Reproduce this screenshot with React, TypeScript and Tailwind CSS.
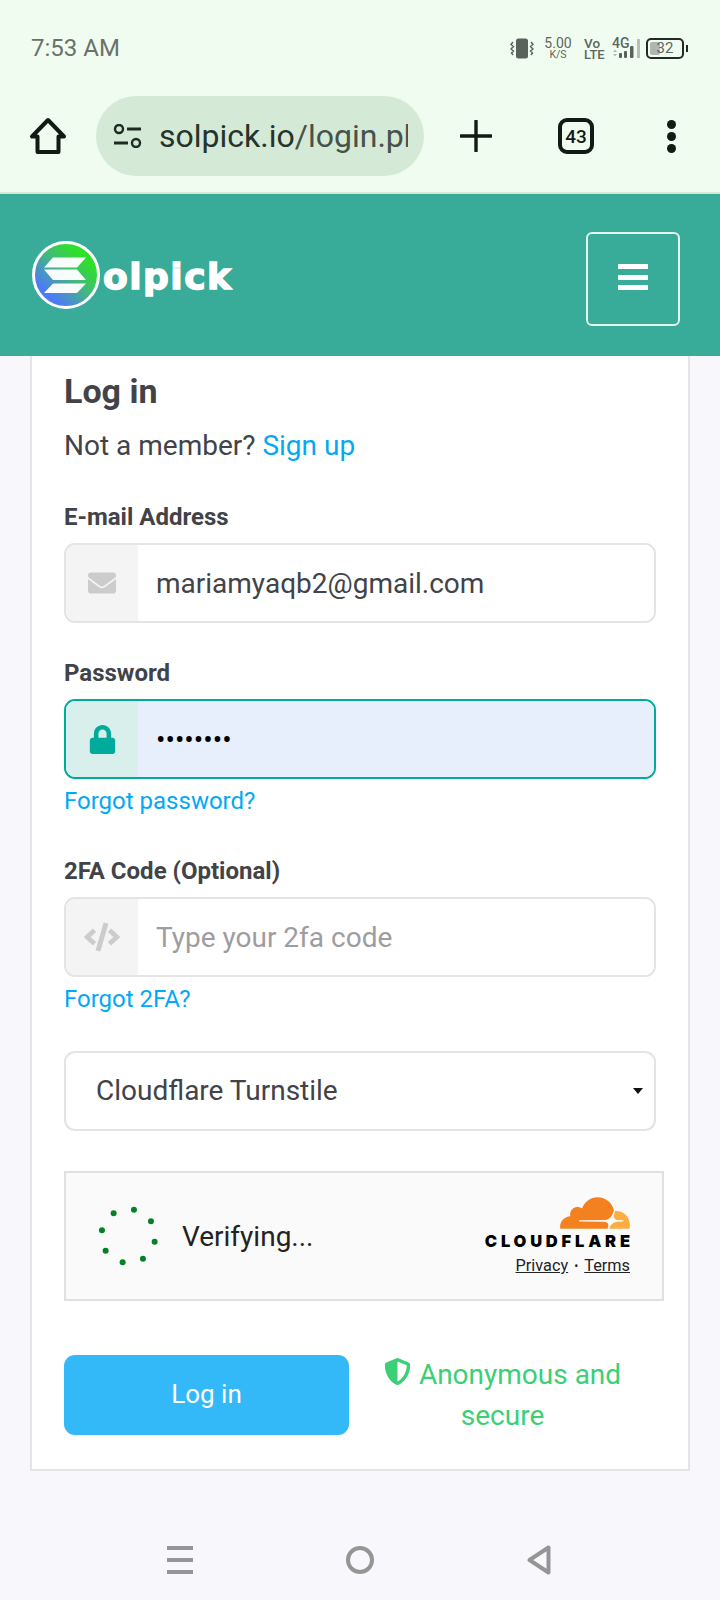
import { FaEnvelope, FaLock, FaCode, FaShieldAlt } from "react-icons/fa";

function Field({ icon, value, type = "text", placeholder, focused = false }: { icon: React.ReactNode; value?: string; type?: string; placeholder?: string; focused?: boolean }) {
  return (
    <div className={`flex h-[80px] w-[592px] overflow-hidden rounded-[11px] border-2 ${focused ? "border-[#00ab9b]" : "border-[#e4e4e4]"}`}>
      <div className={`flex w-[72px] shrink-0 items-center justify-center ${focused ? "bg-[#d8efec] text-[#00ab9b]" : "bg-[#f4f4f4] text-[#cccccc]"}`}>{icon}</div>
      <input
        readOnly
        type={type}
        value={value}
        placeholder={placeholder}
        className={`h-full min-w-0 flex-1 pl-[18px] text-[28px] outline-none placeholder:text-[#9d9da1] ${focused ? "bg-[#e8effc] text-black" : "bg-white text-[#424349]"}`}
      />
    </div>
  );
}

const dots = [[221,149],[272,184],[283,245],[248,296],[187,307],[136,272],[125,211],[160,160]];

export default function App() {
  return (
    <div className="flex h-[1600px] w-[720px] flex-col overflow-hidden bg-[#f8f8fc] font-['Roboto',sans-serif] text-[#424349]">
      {/* Status bar */}
      <div className="flex h-[96px] shrink-0 items-center justify-between bg-[#f1fcf0] pl-[31px] pr-[32px] text-[#5f6660]">
        <span className="text-[24px] leading-none text-[#6a716b]">7:53 AM</span>
        <div className="flex items-center">
          <svg width="24" height="21" viewBox="0 0 24 21" className="mr-[10px]" fill="none">
            <rect x="6" y="0.5" width="12" height="20" rx="2.5" fill="#5a625c" />
            <path d="M3 4L1 6.5l2.500 2-2.500 2.500 2.500 2L1.500 15l1.500 2M21 4l2 2.500-2.500 2 2.500 2.500-2.500 2 2 2-1.500 2" stroke="#5a625c" strokeWidth="1.400" />
          </svg>
          <div className="mr-[12px] flex w-[28px] flex-col items-center">
            <span className="text-[14px] leading-[12px]">5.00</span>
            <span className="mt-[1px] text-[10.500px] leading-[9px]">K/S</span>
          </div>
          <div className="mr-[8px] flex w-[20px] flex-col font-medium">
            <span className="text-[13.500px] leading-[12px]">Vo</span>
            <span className="text-[13px] leading-[11px]">LTE</span>
          </div>
          <div className="relative mr-[6px] h-[21px] w-[28px]">
            <span className="block text-[14px] font-medium leading-[11px]">4G</span>
            <svg width="28" height="21" viewBox="0 0 28 21" fill="none" className="absolute left-0 top-0">
              <path d="M1 14l2-2.500 2 2.500zM1 16l2 2.500 2-2.500z" fill="#b5bab5" />
              <rect x="7" y="15" width="3" height="5" rx="1" fill="#5a625c" />
              <rect x="12" y="13" width="3" height="7" rx="1" fill="#5a625c" />
              <rect x="18" y="8" width="3.500" height="12" rx="1" fill="#5a625c" />
              <rect x="25" y="1" width="3" height="19" fill="#b9beb9" />
            </svg>
          </div>
          <div className="flex items-center">
            <div className="relative flex h-[21px] w-[38px] items-center justify-center rounded-[5px] border-2 border-[#222a24] text-[15px] leading-none">
              <span className="absolute bottom-[2px] left-[2px] top-[2px] w-[10px] rounded-[2px] bg-[#b0b5b0]" />
              <span className="relative">32</span>
            </div>
            <span className="ml-[2px] h-[7px] w-[2px] bg-[#222a24]" />
          </div>
        </div>
      </div>

      {/* Browser toolbar */}
      <div className="flex h-[98px] shrink-0 items-start border-b-2 border-[#d8e8d8] bg-[#f1fcf0]">
        <div className="flex h-[80px] w-[96px] items-center justify-center">
          <svg width="38" height="38" viewBox="0 0 38 38" fill="none" stroke="#111a14" strokeWidth="4" strokeLinejoin="round" strokeLinecap="round">
            <path d="M19 3L3 19.5h5.5V35h21V19.5H35z" />
          </svg>
        </div>
        <div className="flex h-[80px] w-[328px] items-center rounded-[40px] bg-[#d5e9d7] pl-[17px]">
          <svg width="30" height="24" viewBox="0 0 30 24" fill="none" stroke="#1e2a22" strokeWidth="2.400" className="mr-[16px] shrink-0">
            <circle cx="6" cy="5" r="4" />
            <path d="M14 5h14M1 19h14" strokeWidth="2.800" />
            <circle cx="23" cy="19" r="4" />
          </svg>
          <div className="w-[249px] overflow-hidden whitespace-nowrap text-[32px] leading-[38px] text-[#26332b]">
            solpick.io<span className="text-[#45534a]">/login.php</span>
          </div>
        </div>
        <div className="flex h-[80px] w-[104px] items-center justify-center">
          <svg width="32" height="32" viewBox="0 0 32 32" stroke="#111a14" strokeWidth="3.400" strokeLinecap="round">
            <path d="M16 1v30M1 16h30" />
          </svg>
        </div>
        <div className="flex h-[80px] w-[96px] items-center justify-center">
          <div className="flex h-[36px] w-[36px] items-center justify-center rounded-[9px] border-[4px] border-[#111a14] text-[19px] font-medium leading-none text-[#111a14]">43</div>
        </div>
        <div className="flex h-[80px] w-[94px] flex-col items-center justify-center gap-[3px]">
          <span className="h-[9px] w-[9px] rounded-full bg-[#111a14]" />
          <span className="h-[9px] w-[9px] rounded-full bg-[#111a14]" />
          <span className="h-[9px] w-[9px] rounded-full bg-[#111a14]" />
        </div>
      </div>

      {/* Site header */}
      <div className="flex h-[162px] shrink-0 items-start justify-between bg-[#38ac98] pl-[32px] pr-[40px]">
        <div className="mt-[47px] flex items-center">
          <svg width="68" height="68" viewBox="0 0 68 68">
            <defs>
              <linearGradient id="lg" x1="0.85" y1="0.1" x2="0.15" y2="0.85">
                <stop offset="0.15" stopColor="#2ee02a" />
                <stop offset="0.5" stopColor="#43b780" />
                <stop offset="0.9" stopColor="#4c7cf5" />
              </linearGradient>
            </defs>
            <circle cx="34" cy="34" r="32.500" fill="url(#lg)" stroke="#fff" strokeWidth="3" />
            <path d="M21 16.500h33l-9 10H12zM12 28.500h33l9 10.500H21zM21 42.500h33l-9 9.500H12z" fill="#fff" fillOpacity="0.96" />
          </svg>
          <span className="ml-[3px] mt-[3px] font-['DejaVu_Sans',sans-serif] text-[36px] font-bold leading-none tracking-[1.500px] text-white [-webkit-text-stroke:1.500px_white]">olpick</span>
        </div>
        <div className="mt-[38px] flex h-[94px] w-[94px] flex-col items-center justify-center gap-[5.500px] rounded-[6px] border-2 border-[#e6f4f1] pb-[4px]">
          <span className="h-[5px] w-[30px] bg-white" />
          <span className="h-[5px] w-[30px] bg-white" />
          <span className="h-[5px] w-[30px] bg-white" />
        </div>
      </div>

      {/* Login card */}
      <div className="mx-[30px] h-[1115px] shrink-0 border-x-2 border-b-2 border-[#e5e5e5] bg-white pl-[32px] pr-[32px]">
        <h1 className="mt-[16px] text-[34px] font-bold leading-[38px]">Log in</h1>
        <p className="mt-[20px] text-[28px] leading-[32px]">
          Not a member? <span className="text-[#03a9f4]">Sign up</span>
        </p>

        <label className="mt-[41px] block text-[24px] font-bold leading-[28px]">E-mail Address</label>
        <div className="mt-[12px]"><Field icon={<FaEnvelope size={28} />} value="mariamyaqb2@gmail.com" /></div>

        <label className="mt-[36px] block text-[24px] font-bold leading-[28px]">Password</label>
        <div className="mt-[12px]"><Field icon={<FaLock size={29} />} type="password" value="password" focused /></div>
        <div className="mt-[8px] text-[24px] leading-[28px] text-[#03a9f4]">Forgot password?</div>

        <label className="mt-[42px] block text-[24px] font-bold leading-[28px]">2FA Code (Optional)</label>
        <div className="mt-[12px]"><Field icon={<FaCode size={36} />} placeholder="Type your 2fa code" /></div>
        <div className="mt-[8px] text-[24px] leading-[28px] text-[#03a9f4]">Forgot 2FA?</div>

        <div className="mt-[38px] flex h-[80px] w-[592px] items-center justify-between rounded-[11px] border-2 border-[#e4e4e4] pl-[30px] pr-[11px] text-[28px]">
          <span>Cloudflare Turnstile</span>
          <svg width="10" height="6" viewBox="0 0 10 6"><path d="M0 0h10L5 6z" fill="#111" /></svg>
        </div>

        <div className="mt-[40px] flex h-[130px] w-[600px] items-center justify-between border-2 border-[#e0e0e0] bg-[#fafafa] pl-[29px] pr-[32px]">
          <div className="flex items-center">
            <svg width="66" height="66" viewBox="34.700 43 66 66" className="shrink-0">
              {dots.map(([x, y]) => (
                <circle key={x} cx={x / 3} cy={y / 3} r="3" fill="#038127" />
              ))}
            </svg>
            <span className="ml-[21px] pt-[2px] text-[28px] leading-none text-[#232323]">Verifying...</span>
          </div>
          <div className="flex flex-col items-end">
            <svg width="70" height="32" viewBox="0 6.500 24 11">
              <path fill="#f48120" d="M16.5088 16.8447c.1475-.5068.0908-.9707-.1553-1.3154-.2246-.3164-.6045-.499-1.0615-.5205l-8.6592-.1123a.1559.1559 0 0 1-.1333-.0713c-.0283-.042-.0351-.0986-.021-.1553.0278-.084.1123-.1484.2036-.1562l8.7359-.1123c1.0351-.0489 2.1601-.8868 2.5537-1.9136l.499-1.3013c.0215-.0561.0293-.1128.0147-.168-.5625-2.5463-2.835-4.4453-5.5499-4.4453-2.5039 0-4.6284 1.6177-5.3876 3.8614-.4927-.3658-1.1187-.5625-1.794-.499-1.2026.119-2.1665 1.083-2.2861 2.2856-.0283.31-.0069.6128.0635.894C1.5683 13.171 0 14.7754 0 16.752c0 .1748.0142.3515.0352.5273.0141.083.0844.1475.1689.1475h15.9814c.0909 0 .1758-.0645.2032-.1553l.12-.4268z" />
              <path fill="#fbad41" d="M19.2656 11.2813c-.0771 0-.1611 0-.2383.0112-.0566 0-.1054.0415-.127.0976l-.3378 1.1744c-.1475.5068-.0918.9707.1543 1.3164.2256.3164.6055.498 1.0625.5195l1.8437.1133c.0557 0 .1055.0263.1329.0703.0283.043.0351.1074.0214.1562-.0283.084-.1132.1485-.204.1553l-1.921.1123c-1.041.0488-2.1582.8867-2.5527 1.914l-.1406.3585c-.0283.0713.0215.1416.0986.1416h6.5977c.0771 0 .1474-.0489.169-.126.1122-.4082.1757-.837.1757-1.2803 0-2.6025-2.125-4.727-4.7344-4.727" />
            </svg>
            <span className="mt-[5px] mr-[-3.800px] whitespace-nowrap font-['Inter',sans-serif] text-[16.500px] font-black leading-[14px] tracking-[3.800px] text-black">CLOUDFLARE</span>
            <div className="mt-[9px] flex items-center text-[16.300px] leading-[18px] text-[#232323]">
              <span className="underline">Privacy</span>
              <span className="mx-[6px] text-[12px]">•</span>
              <span className="underline">Terms</span>
            </div>
          </div>
        </div>

        <div className="mt-[54px] flex">
          <button className="h-[80px] w-[285px] rounded-[11px] bg-[#33b9f8] pb-[1px] text-[26px] text-white">Log in</button>
          <div className="-mt-[1px] ml-[8px] w-[291px] text-center text-[28px] leading-[41px] text-[#3bcf76]">
            <FaShieldAlt size={27} className="mr-[8px] inline align-[-1px]" />
            Anonymous and secure
          </div>
        </div>
      </div>

      {/* Nav bar */}
      <div className="flex flex-1 items-start justify-center bg-[#f8f8fc] pr-[2px]">
        <div className="mt-[74px] flex w-[384px] items-center justify-between">
          <div className="flex w-[26px] flex-col gap-[8px]">
            <span className="h-[4px] bg-[#959595]" />
            <span className="h-[4px] bg-[#959595]" />
            <span className="h-[4px] bg-[#959595]" />
          </div>
          <svg width="28" height="28" viewBox="0 0 28 28" fill="none" stroke="#959595" strokeWidth="4"><circle cx="14" cy="14" r="12" /></svg>
          <svg width="24" height="30" viewBox="0 0 24 30" fill="none" stroke="#959595" strokeWidth="4" strokeLinejoin="round"><path d="M21.500 2.500v25L2.500 15z" /></svg>
        </div>
      </div>
    </div>
  );
}
